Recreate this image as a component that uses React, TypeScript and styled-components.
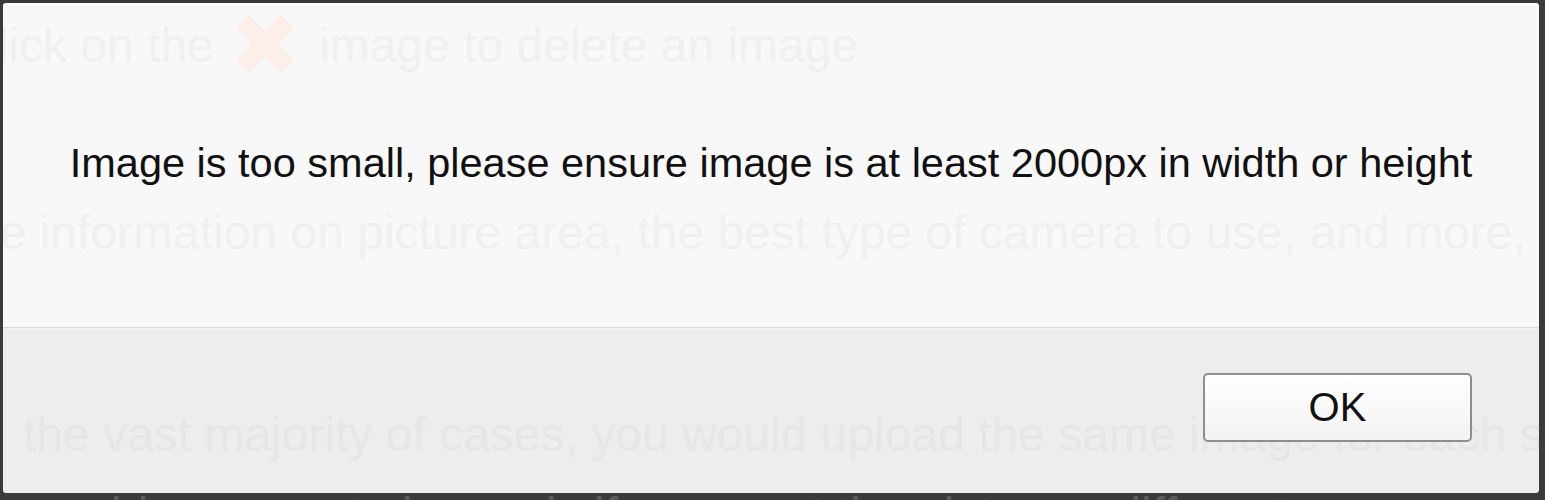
import styled, { createGlobalStyle } from 'styled-components';

const GlobalStyle = createGlobalStyle`
	html, body {
		margin: 0;
		padding: 0;
		background: #3b3b3b;
	}
	* {
		box-sizing: border-box;
	}
`;

const App = () => {
	return (
		<>
			<GlobalStyle />
			<Backdrop>
				<Dialog>
					<MessagePanel>
						<Ghost>
							<GhostLine $indent={-40} $top={13}>
								Click on the <GhostCross>✖</GhostCross>image to delete an image
							</GhostLine>
							<GhostLine $indent={-86} $top={131}>
								More information on picture area, the best type of camera to use, and more,
							</GhostLine>
						</Ghost>
						<MessageLayer>
							<Message>
								Image is too small, please ensure image is at least 2000px in width or height
							</Message>
						</MessageLayer>
					</MessagePanel>

					<Footer>
						<Ghost>
							<FooterGhostLine>
								the vast majority of cases, you would upload the same image for each size, just
							</FooterGhostLine>
						</Ghost>
						<ButtonRow>
							<OkButton>OK</OkButton>
						</ButtonRow>
					</Footer>
				</Dialog>
				<PageStrip>would a separate image is if you want the picture a different crop</PageStrip>
			</Backdrop>
		</>
	);
};

const Backdrop = styled.div`
	height: 500px;
	overflow: hidden;
	padding: 3px 6px 0 3px;
	background: #3b3b3b;
	font-family: 'Liberation Sans', Arial, sans-serif;
`;

const Dialog = styled.div`
	display: flex;
	flex-direction: column;
	height: 490px;
	border-radius: 4px;
	overflow: hidden;
	background: #ededed;
	box-shadow: inset 1px 0 0 #ffffff;
`;

const MessagePanel = styled.div`
	display: grid;
	height: 325px;
	background: #f8f8f8;
	border-top: 2px solid #ffffff;
	border-bottom: 1px solid #d9d9d9;
	overflow: hidden;
`;

const Ghost = styled.div`
	grid-area: 1 / 1;
	display: flex;
	flex-direction: column;
	overflow: hidden;
`;

const GhostLine = styled.div<{ $indent: number; $top: number }>`
	margin-top: ${(p) => p.$top}px;
	text-indent: ${(p) => p.$indent}px;
	white-space: nowrap;
	font-size: 48px;
	line-height: 56px;
	color: #f0f0f0;
`;

const GhostCross = styled.span`
	display: inline-block;
	width: 76px;
	margin: 0 16px 0 0;
	text-indent: 0;
	text-align: center;
	font-size: 88px;
	line-height: 56px;
	color: #fcefe9;
	vertical-align: top;
`;

const MessageLayer = styled.div`
	grid-area: 1 / 1;
	display: flex;
	justify-content: center;
	padding-top: 134px;
`;

const Message = styled.div`
	font-size: 41.5px;
	line-height: 48px;
	color: #111111;
	white-space: nowrap;
`;

const Footer = styled.div`
	display: grid;
	flex: 1;
	background: #ededed;
	border-top: 1px solid #f4f4f4;
`;

const FooterGhostLine = styled.div`
	margin-top: 78px;
	padding-left: 20px;
	white-space: nowrap;
	font-size: 48px;
	line-height: 56px;
	color: #e6e6e6;
`;

const ButtonRow = styled.div`
	grid-area: 1 / 1;
	display: flex;
	justify-content: flex-end;
	align-items: flex-start;
	padding: 44px 67px 0 0;
`;

const OkButton = styled.button`
	width: 269px;
	height: 69px;
	border: 2px solid #8e8e8e;
	border-radius: 5px;
	background: linear-gradient(#ffffff, #f3f3f3);
	font-family: 'Liberation Sans', Arial, sans-serif;
	font-size: 40px;
	color: #111111;
	cursor: pointer;
`;

const PageStrip = styled.div`
	height: 7px;
	overflow: hidden;
	padding-left: 20px;
	white-space: nowrap;
	font-size: 48px;
	line-height: 44px;
	color: #5c5c5c;
`;

export default App;
